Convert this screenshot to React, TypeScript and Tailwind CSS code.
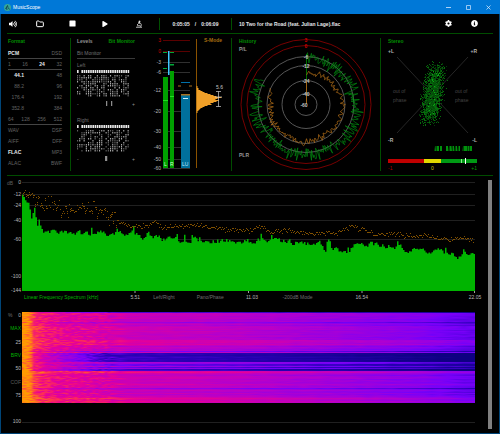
import { Folder } from "lucide-react";
import { FaCog, FaInfoCircle, FaPlay, FaStop, FaVolumeUp } from "react-icons/fa";

type Point = [number, number];

// small seeded generator so that the drawings stay the same between renders
function random(seed: number) {
  let s = seed;
  return () => {
    s = (s * 1664525 + 1013904223) % 4294967296;
    return s / 4294967296;
  };
}

function interpolate(points: Point[], x: number) {
  for (let i = 1; i < points.length; i++) {
    if (x <= points[i][0]) {
      const [x0, y0] = points[i - 1];
      const [x1, y1] = points[i];
      return y0 + ((y1 - y0) * (x - x0)) / (x1 - x0);
    }
  }
  return points[points.length - 1][1];
}

const dot = (x: number, y: number) => `M${x} ${y}h1v1h-1z`;

/* ---------- title bar and toolbar ---------- */

function TitleBar() {
  return (
    <header className="-mx-px flex h-3.5 items-center bg-[#0078d7] pl-1 text-white">
      <svg viewBox="0 0 14 14" className="h-[7px] w-[7px]">
        <circle cx="7" cy="7" r="7" fill="#35a79a" />
        <path d="M3 10L7 3l1 4 3 4M5 7l1 5" stroke="#0c3b4a" strokeWidth="1.6" fill="none" />
      </svg>
      <h1 className="ml-[2px] flex-1 text-[5px]">MusicScope</h1>
      <div className="flex items-center gap-[13px] pr-[8px]">
        <button aria-label="Minimize" className="flex h-[7px] w-[7px] items-center justify-center">
          <svg viewBox="0 0 7 7" className="h-full w-full"><path d="M1 3.5h5" stroke="#d8eaff" strokeWidth="0.8" /></svg>
        </button>
        <button aria-label="Maximize" className="flex h-[7px] w-[7px] items-center justify-center">
          <svg viewBox="0 0 7 7" className="h-full w-full"><path d="M1.5 1.5h4v4h-4z" fill="none" stroke="#d8eaff" strokeWidth="0.7" /></svg>
        </button>
        <button aria-label="Close" className="flex h-[7px] w-[7px] items-center justify-center">
          <svg viewBox="0 0 7 7" className="h-full w-full"><path d="M1.5 1.5l4 4m0-4l-4 4" stroke="#e6f2ff" strokeWidth="0.7" /></svg>
        </button>
      </div>
    </header>
  );
}

function Microscope() {
  return (
    <svg viewBox="0 0 16 16" className="h-2 w-2" fill="none" stroke="#e0e0e0" strokeWidth="1.6">
      <path d="M2 14.500h12M4 11.500h7" />
      <path d="M8 1l3 1-2 6-3-1z" fill="#e0e0e0" stroke="none" />
      <path d="M10 6c3 1 3.500 5 1 8M6 8l-2 2" />
    </svg>
  );
}

function Toolbar() {
  return (
    <div className="mx-1.5 flex h-5 items-center border-b border-[#004d00] text-[8px] text-white">
      <div className="flex w-[152px] items-center gap-[19px] pl-[2px]">
        <button aria-label="Volume" className="w-2"><FaVolumeUp className="h-2 w-2" /></button>
        <div className="flex items-center gap-[25px]">
          <button aria-label="Open" className="w-2"><Folder className="h-2 w-2" strokeWidth={3} /></button>
          <button aria-label="Stop" className="w-2"><FaStop className="h-[7px] w-[7px]" /></button>
          <button aria-label="Play" className="w-2"><FaPlay className="h-[6px] w-[6px]" /></button>
          <button aria-label="Analyze" className="w-2"><Microscope /></button>
        </div>
      </div>
      <div className="flex h-3 w-[73px] items-center justify-center gap-[5px] border-x border-[#005000] text-[5px] font-bold text-gray-200">
        <span>0:05:05</span>
        <span>/</span>
        <span>0:06:09</span>
      </div>
      <span className="flex-1 whitespace-nowrap pl-[7px] text-[5px] font-bold text-gray-200">
        10 Two for the Road (feat. Julian Lage).flac
      </span>
      <div className="flex items-center gap-[19px] pr-[15px]">
        <button aria-label="Settings"><FaCog className="h-[7px] w-[7px]" /></button>
        <button aria-label="Info"><FaInfoCircle className="h-[7px] w-[7px]" /></button>
      </div>
    </div>
  );
}

/* ---------- format ---------- */

interface FormatRow {
  items: string[];
  active?: string;
  line?: boolean;
  indent?: boolean;
}

const formatRows: FormatRow[] = [
  { items: ["PCM", "DSD"], active: "PCM", line: true },
  { items: ["1", "16", "24", "32"], active: "24", line: true },
  { items: ["44.1", "48"], active: "44.1", indent: true },
  { items: ["88.2", "96"], indent: true },
  { items: ["176.4", "192"], indent: true },
  { items: ["352.8", "384"], indent: true },
  { items: ["64", "128", "256", "512"], line: true },
  { items: ["WAV", "DSF"] },
  { items: ["AIFF", "DFF"] },
  { items: ["FLAC", "MP3"], active: "FLAC" },
  { items: ["ALAC", "BWF"] },
];

function FormatPanel() {
  return (
    <section className="border-r border-[#004d00] pl-[7px] pr-[8px]">
      <h2 className="h-[10px] font-bold text-[#009000]">Format</h2>
      {formatRows.map((row) => (
        <div
          key={row.items[0]}
          className={`flex h-[11px] items-center justify-between border-b text-[#646464] ${row.line ? "border-[#444444]" : "border-transparent"}`}
        >
          {row.items.map((item, i) => (
            <span
              key={item}
              className={`${item === row.active ? "font-bold text-gray-200" : ""} ${row.indent && i === 0 ? "w-4 text-right" : ""}`}
            >
              {item}
            </span>
          ))}
        </div>
      ))}
    </section>
  );
}

/* ---------- bit monitor ---------- */

function BitPattern({ seed }: { seed: number }) {
  const rnd = random(seed);
  let bars = "";
  let bits = "";
  let dimBits = "";
  for (let col = 0; col < 24; col++) {
    const x = (col * 2.2).toFixed(1);
    if (col !== 1) bars += `M${x} 0h1.6v3h-1.6z`;
    for (let row = 0; row < 11; row++) {
      const r = rnd();
      const y = 5 + row * 2;
      const fill = col < 3 ? 0.2 : 0.42;
      if (r < fill) bits += `M${x} ${y}h1.1v1.6h-1.1z`;
      else if (r < fill + 0.25) dimBits += `M${x} ${y}h1.1v1.4h-1.1z`;
    }
  }
  return (
    <svg viewBox="0 0 53 28" className="h-[28px] w-[53px]">
      <path d={bars} fill="#e8e8e8" />
      <path d={bits} fill="#a8a8a8" />
      <path d={dimBits} fill="#606060" />
    </svg>
  );
}

function Channel({ name, seed, marks }: { name: string; seed: number; marks: number[] }) {
  return (
    <div className="mb-[5px]">
      <h3 className="flex h-[11px] items-center text-[#707070]">{name}</h3>
      <BitPattern seed={seed} />
      <div className="flex h-[11px] items-center text-[#909090]">
        <span>-</span>
        <svg viewBox="0 0 53 5" className="h-[5px] flex-1">
          {marks.map((x) => (
            <rect key={x} x={x} y="0" width="1" height="5" fill="#b0b0b0" />
          ))}
        </svg>
        <span>+</span>
      </div>
    </div>
  );
}

function LevelsPanel() {
  return (
    <section className="pl-[6px] pr-[6px]">
      <div className="flex h-[10px] items-start justify-between font-bold">
        <button className="text-[#909090]">Levels</button>
        <button className="text-[#009000]">Bit Monitor</button>
      </div>
      <h2 className="flex h-[11px] items-center border-b border-[#3a3a3a] text-[#707070]">Bit Monitor</h2>
      <Channel name="Left" seed={11} marks={[27, 32]} />
      <Channel name="Right" seed={29} marks={[26, 27]} />
    </section>
  );
}

/* ---------- level meters ---------- */

const meterScale: [string, number][] = [
  ["3", 6], ["0", 17], ["-3", 28], ["-6", 38], ["-12", 56],
  ["-20", 77], ["-30", 97], ["-40", 113], ["-50", 125], ["-60", 134],
];

const loudnessWidths = [
  1, 1, 2, 2, 4, 6, 8, 11, 14, 17, 20, 25, 21, 19, 22, 20, 17, 14, 15, 11, 8, 6, 4, 3, 2, 1, 1,
];

function MeterPanel() {
  return (
    <section className="border-r border-[#004d00]">
      <svg viewBox="1 4 90 133" className="h-[133px] w-full">
        {meterScale.map(([label, y], i) => (
          <g key={label}>
            <rect x="23" y={y} width="27" height="1" fill={i < 2 ? "#5a0000" : "#303030"} />
            <text x="21" y={y + 2} textAnchor="end" fill={i < 2 ? "#d00000" : "#b8b8b8"}>{label}</text>
          </g>
        ))}
        <rect x="23" y="43" width="5" height="91" fill="#00a000" />
        <rect x="30" y="37" width="4" height="97" fill="#00a000" />
        <path d="M23 34h4v1h-4zM30 18h4v1h-4zM23 18h4v1h-4zM30 30h4v1.5h-4z" fill="#00a838" />
        <path d="M23 66h5v1h-5zM30 62h4v1h-4z" fill="#20e020" />
        <rect x="28" y="17" width="1.5" height="24" fill="#40c8ff" />
        <rect x="41" y="61" width="9" height="73" fill="#00709c" />
        <rect x="41" y="60" width="9" height="1.5" fill="#a87020" />
        <rect x="41" y="48" width="9" height="1" fill="#0070a8" />
        <path d="M38 51.5h3v1h-3zM49 51.5h3v1h-3z" fill="#a87020" />
        <rect x="43" y="64" width="5" height="1" fill="#d0f0ff" />
        <text x="24" y="132" fill="#d0ffd0">L</text>
        <text x="30" y="132" fill="#d0ffd0">R</text>
        <text x="42" y="132" fill="#c0e8ff">LU</text>
        <rect x="56" y="5" width="1" height="129" fill="#8a5200" />
        <text x="64" y="8" fontWeight="bold" fill="#a86c10">S-Mode</text>
        {loudnessWidths.map((w, i) => (
          <rect key={i} x="56.5" y={52 + i} width={w} height="1" fill="#f0a028" />
        ))}
        <path d="M76 57.500h5M78.500 57.500v15M76 72.500h5M75 63h7" stroke="#d0d0d0" strokeWidth="0.7" />
        <text x="76" y="55" fill="#c8c8c8">5.6</text>
      </svg>
    </section>
  );
}

/* ---------- history ---------- */

const rings: [string, number, string][] = [
  ["3", 65, "#840000"],
  ["0", 59, "#840000"],
  ["-6", 48, "#606060"],
  ["-12", 39, "#606060"],
  ["-24", 24, "#606060"],
  ["-40", 11, "#606060"],
];

function radialPath(seed: number, end: number, step: number, jitter: number, radius: Point[]) {
  const rnd = random(seed);
  let d = "";
  for (let a = 0; a <= end; a += step) {
    const r = interpolate(radius, a) + (rnd() + rnd() - 1) * jitter;
    const t = (a * Math.PI) / 180;
    d += `${d ? "L" : "M"}${(76.5 + r * Math.sin(t)).toFixed(1)} ${(70.5 - r * Math.cos(t)).toFixed(1)}`;
  }
  return d;
}

function HistoryPanel() {
  const peak = radialPath(7, 300, 1.1, 9, [[0, 47], [45, 46], [90, 49], [110, 53], [150, 49], [200, 51], [235, 49], [270, 50], [300, 53]]);
  const loudness = radialPath(23, 294, 2, 4, [[0, 31], [30, 33], [70, 34], [90, 37], [140, 35], [190, 38], [230, 38], [270, 36], [294, 39]]);
  return (
    <section className="border-r border-[#004d00]">
      <svg viewBox="2 4 148 133" className="h-[133px] w-full">
        {rings.map(([label, r, color]) => (
          <circle key={label} cx="76" cy="70.5" r={r} fill="none" stroke={color} strokeWidth="0.9" />
        ))}
        <path d="M76.500 70V38" stroke="#a06414" />
        <path d="M76.500 46V20" stroke="#007000" />
        <path d={loudness} fill="none" stroke="#b47018" strokeWidth="0.7" />
        <path d={peak} fill="none" stroke="#009a10" strokeWidth="0.6" />
        {rings.map(([label, r]) => (
          <text key={label} x="76" y={72.5 - r} textAnchor="middle" fontWeight="bold" fill={r > 50 ? "#c80000" : "#c0c0c0"}>
            {label}
          </text>
        ))}
        <text x="74" y="73" textAnchor="middle" fontWeight="bold" fill="#c0c0c0">-60</text>
        <text x="9" y="9" fontWeight="bold" fill="#009000">History</text>
        <text x="9" y="17" fontWeight="bold" fill="#989898">P/L</text>
        <text x="9" y="123" fontWeight="bold" fill="#989898">PLR</text>
      </svg>
    </section>
  );
}

/* ---------- stereo ---------- */

function StereoPanel() {
  const rnd = random(5);
  const cloud = ["", "", ""];
  for (let i = 0; i < 1900; i++) {
    const lower = rnd() < 0.55;
    const dx = rnd() + rnd() + rnd() - 1.5;
    const dy = rnd() + rnd() - 1;
    const y = (lower ? 69 : 47) + dy * (lower ? 23 : 21);
    const x = 62.5 - (y - 58) * 0.13 + dx * 9;
    const core = Math.abs(dx) < 0.5 && Math.abs(dy) < 0.5;
    const shade = core ? Math.floor(rnd() * 3) : Math.floor(rnd() * 2);
    cloud[shade] += dot(Math.round(x), Math.round(y));
  }
  let stripes = "";
  for (let x = 65; x < 102; x++) {
    if (x < 72 ? rnd() > 0.35 : x > 74 && rnd() > 0.15) stripes += `M${x} 112h${rnd() > 0.3 ? 1 : 0.5}v5h-1z`;
  }
  return (
    <section>
      <svg viewBox="11 4 118 133" className="h-[133px] w-full">
        <path d="M27 23l71 76M98 23L27 99" stroke="#303030" strokeWidth="0.8" />
        <path d={cloud[2]} fill="#0aa814" />
        <path d={cloud[1]} fill="#066c0c" />
        <path d={cloud[0]} fill="#034808" fillOpacity="0.8" />
        <text x="18" y="9" fontWeight="bold" fill="#009000">Stereo</text>
        <g fill="#b0b0b0" fontWeight="bold">
          <text x="18" y="19">+L</text>
          <text x="107" y="19" textAnchor="end">+R</text>
          <text x="18" y="108">-R</text>
          <text x="107" y="108" textAnchor="end">-L</text>
        </g>
        <g fill="#444444">
          <text x="23" y="59">out of</text>
          <text x="23" y="68">phase</text>
          <text x="85" y="59">out of</text>
          <text x="85" y="68">phase</text>
        </g>
        <path d={stripes} fill="#00900c" />
        <rect x="18" y="125" width="36" height="4" fill="#c00000" />
        <rect x="54" y="125" width="17" height="4" fill="#e0d800" />
        <rect x="71" y="125" width="36" height="4" fill="#009a14" />
        <rect x="91" y="125" width="1" height="4" fill="#90e090" />
        <rect x="95" y="124" width="1" height="6" fill="#ffffff" />
        <text x="18" y="136" fill="#b00000">-1</text>
        <text x="61" y="136" fill="#d0c800">0</text>
        <text x="107" y="136" textAnchor="end" fill="#00a000">+1</text>
      </svg>
    </section>
  );
}

/* ---------- spectrum ---------- */

const dbScale: [string, number][] = [
  ["0", 2], ["-12", 14], ["-24", 25], ["-40", 40], ["-60", 59], ["-100", 96], ["-144", 110],
];

const spectrumShape: Point[] = [
  [0, 16], [2, 16], [4, 24], [6, 22], [9, 38], [12, 30], [15, 46], [16, 38], [19, 52], [60, 53],
  [110, 53], [120, 57], [145, 59], [200, 61], [226, 61], [255, 59], [262, 62], [300, 64], [303, 72],
  [305, 57], [310, 69], [325, 72], [332, 63], [350, 65], [375, 67], [385, 71], [428, 72], [435, 76], [453, 73],
];

const peakShape: Point[] = [
  [0, 12], [10, 14], [15, 20], [23, 25], [32, 23], [42, 31], [60, 27], [75, 28], [80, 34], [90, 36],
  [96, 42], [105, 45], [124, 46], [132, 42], [140, 47], [177, 45], [205, 49], [228, 50], [240, 46],
  [248, 52], [268, 49], [278, 53], [315, 52], [328, 46], [345, 51], [352, 54], [378, 53], [382, 55],
  [408, 56], [421, 60], [441, 58], [453, 60],
];

function spectrumArea() {
  const rnd = random(17);
  let d = "M0 111";
  let v = 0;
  for (let x = 0; x < 453; x += 1.5) {
    v = v * 0.45 + (rnd() - 0.5) * 5;
    const spike = x > 20 && rnd() > 0.93 ? 4 : 0;
    const y = interpolate(spectrumShape, x) + v - spike;
    d += `L${x} ${y.toFixed(1)}h1.5`;
  }
  return `${d}V111z`;
}

function peakDots() {
  const rnd = random(41);
  let d = "";
  for (let x = 1; x < 452; x++) {
    const spread = x > 12 && x < 95 ? 10 : 3;
    const y = interpolate(peakShape, x) + (rnd() + rnd() - 1) * spread;
    d += dot(x, Math.round(y));
    if (x < 95 && rnd() > 0.6) d += dot(x, Math.round(y + 2));
  }
  return d;
}

const tickLabel = "ml-auto -mr-2 w-4 text-center text-[#b8b8b8]";

function Spectrum() {
  return (
    <section className="pt-1">
      <div className="flex">
        <svg viewBox="0 0 21 113" className="h-[113px] w-[21px] shrink-0">
          <text x="6" y="5" fill="#606060">dB</text>
          {dbScale.map(([label, y]) => (
            <text key={label} x="20" y={y + 2} textAnchor="end" fill="#b8b8b8">{label}</text>
          ))}
        </svg>
        <svg viewBox="0 0 453 113" preserveAspectRatio="none" className="h-[113px] min-w-0 flex-1">
          {dbScale.slice(0, 5).map(([label, y]) => (
            <rect key={label} x="0" y={y} width="453" height="1" fill="#202020" />
          ))}
          <path d={spectrumArea()} fill="#00b400" />
          <path d={peakDots()} fill="#805000" />
          <path d="M113 111v2M226.500 111v2M340 111v2M452.500 111v2" stroke="#a0a0a0" strokeWidth="1" />
        </svg>
      </div>
      <div className="ml-[21px] grid h-2 grid-cols-4 items-center whitespace-nowrap">
        <div className="flex pl-[2px]">
          <button className="text-[#00b400]">Linear Frequency Spectrum [kHz]</button>
          <span className={tickLabel}>5.51</span>
        </div>
        <div className="flex gap-[22px] pl-[18px]">
          <button className="text-[#707070]">Left/Right</button>
          <button className="text-[#707070]">Pano/Phase</button>
          <span className={tickLabel}>11.03</span>
        </div>
        <div className="flex pl-[34px]">
          <button className="text-[#707070]">-200dB Mode</button>
          <span className={tickLabel}>16.54</span>
        </div>
        <div className="flex">
          <span className={tickLabel}>22.05</span>
        </div>
      </div>
    </section>
  );
}

/* ---------- spectrogram ---------- */

const heat: [number, number[]][] = [
  [0, [14, 0, 130]],
  [0.2, [40, 0, 180]],
  [0.4, [118, 0, 250]],
  [0.58, [180, 0, 205]],
  [0.74, [232, 0, 150]],
  [0.86, [255, 50, 80]],
  [1, [255, 156, 0]],
];

function heatColor(value: number) {
  const v = Math.max(0, Math.min(1, value));
  for (let i = 1; i < heat.length; i++) {
    if (v <= heat[i][0]) {
      const [v0, a] = heat[i - 1];
      const [v1, b] = heat[i];
      const t = (v - v0) / (v1 - v0);
      return `rgb(${a.map((c, k) => Math.round(c + (b[k] - c) * t)).join(",")})`;
    }
  }
  return "rgb(255,156,0)";
}

// loudness offset of each time slice, quiet passages are negative
function sliceLevel(row: number) {
  if (row === 0) return -0.3;
  if (row === 10) return -0.1;
  if (row >= 28 && row <= 33) return 0.06;
  if (row === 39) return -0.22;
  if (row >= 41 && row <= 49) return -0.4;
  if (row === 52 || row === 53 || row === 55) return -0.25;
  if (row >= 50 && row <= 56) return -0.12;
  if (row === 57 || row === 58) return -0.38;
  if (row === 59 || row === 60) return 0.12;
  if (row >= 61 && row <= 75) return 0.03;
  if (row === 76) return -0.15;
  if (row >= 85) return 0.1;
  return 0;
}

const frequencyLevel: Point[] = [
  [0, 1], [8, 0.98], [12, 0.86], [20, 0.8], [40, 0.73], [80, 0.68], [110, 0.63], [180, 0.6], [230, 0.57], [320, 0.5], [400, 0.43], [453, 0.34],
];

function spectrogramRows() {
  const rnd = random(3);
  const rows: { offset: number; color: string }[][] = [];
  for (let row = 0; row < 91; row++) {
    const level = sliceLevel(row) + (rnd() - 0.5) * 0.08;
    const stops: { offset: number; color: string }[] = [];
    for (let x = 0; x <= 453; x += x < 90 ? 3 : 8) {
      const weight = Math.min(1, x / 80);
      const quiet = level < -0.2 ? weight : Math.min(1, 0.3 + weight);
      const noise = (rnd() - 0.5) * (x < 100 ? 0.15 : 0.05);
      stops.push({ offset: x / 453, color: heatColor(interpolate(frequencyLevel, x) + level * quiet + noise) });
    }
    rows.push(stops);
  }
  return rows;
}

function Spectrogram() {
  const rows = spectrogramRows();
  return (
    <section className="mt-[7px] flex">
      <div className="w-[21px] shrink-0 pr-px text-right text-[#b8b8b8]">
        <div className="grid h-[94px] grid-rows-7 items-center justify-items-end">
          <div className="flex w-full justify-between pl-[7px]">
            <span className="text-[#707070]">%</span>
            <span>0</span>
          </div>
          <button className="text-[#00b400]">MAX</button>
          <span>25</span>
          <button className="text-[#00b400]">BRV</button>
          <span>50</span>
          <button className="text-[#5c5c5c]">COF</button>
          <span>75</span>
        </div>
        <div className="flex h-[22px] items-end justify-end">100</div>
      </div>
      <svg viewBox="0 0 453 112" preserveAspectRatio="none" className="mt-1 h-[112px] min-w-0 flex-1">
        <defs>
          {rows.map((stops, i) => (
            <linearGradient key={i} id={`slice${i}`}>
              {stops.map((s) => (
                <stop key={s.offset} offset={s.offset} stopColor={s.color} />
              ))}
            </linearGradient>
          ))}
        </defs>
        {rows.map((_, i) => (
          <rect key={i} x="0" y={i} width="453" height="1" fill={`url(#slice${i})`} />
        ))}
        <rect x="0" y="110" width="453" height="1" fill="#202020" />
      </svg>
    </section>
  );
}

export default function App() {
  return (
    <div className="w-full border-x border-b border-[#004578] bg-black font-['Liberation_Sans',Arial,sans-serif] text-[5px] leading-[6px]">
      <TitleBar />
      <Toolbar />
      <div className="grid grid-cols-[70fr_70fr_91fr_149fr_118fr] py-1">
        <FormatPanel />
        <LevelsPanel />
        <MeterPanel />
        <HistoryPanel />
        <StereoPanel />
      </div>
      <main className="mx-1.5 border-t border-[#004d00]">
        <div className="-mx-1.5 flex">
          <div className="min-w-0 flex-1 pb-[9px]">
            <Spectrum />
            <Spectrogram />
          </div>
          <div className="flex w-6 justify-center pb-1 pl-[6px] pt-1">
            <div className="w-1 bg-[#808080]" />
          </div>
        </div>
      </main>
    </div>
  );
}
